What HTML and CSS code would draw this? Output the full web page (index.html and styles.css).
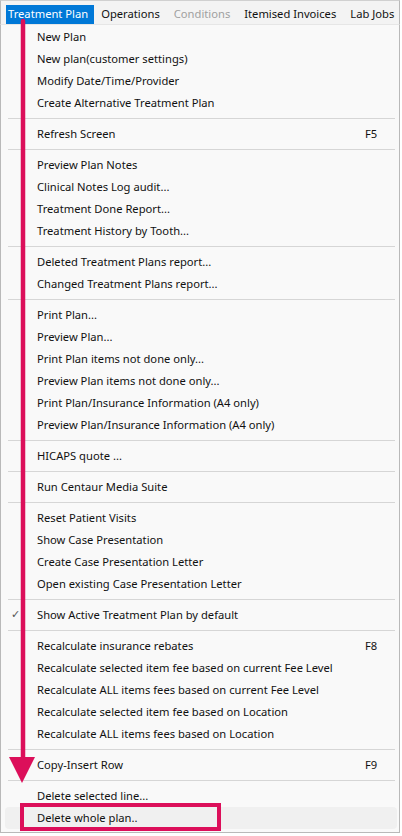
FILE: index.html
```html
<!DOCTYPE html>
<html>
<head>
<meta charset="utf-8">
<link rel="stylesheet" href="styles.css">
</head>
<body>
<div class="frame">
  <div class="menubar">
    <span class="top-item active">Treatment Plan</span>
    <span class="top-item">Operations</span>
    <span class="top-item disabled">Conditions</span>
    <span class="top-item">Itemised Invoices</span>
    <span class="top-item">Lab Jobs</span>
  </div>
  <div class="dropdown">
    <div class="item">New Plan</div>
    <div class="item">New plan(customer settings)</div>
    <div class="item">Modify Date/Time/Provider</div>
    <div class="item">Create Alternative Treatment Plan</div>
    <div class="sep"></div>
    <div class="item">Refresh Screen<span class="key">F5</span></div>
    <div class="sep"></div>
    <div class="item">Preview Plan Notes</div>
    <div class="item">Clinical Notes Log audit...</div>
    <div class="item">Treatment Done Report...</div>
    <div class="item">Treatment History by Tooth...</div>
    <div class="sep"></div>
    <div class="item">Deleted Treatment Plans report...</div>
    <div class="item">Changed Treatment Plans report...</div>
    <div class="sep"></div>
    <div class="item">Print Plan...</div>
    <div class="item">Preview Plan...</div>
    <div class="item">Print Plan items not done only...</div>
    <div class="item">Preview Plan items not done only...</div>
    <div class="item">Print Plan/Insurance Information (A4 only)</div>
    <div class="item">Preview Plan/Insurance Information (A4 only)</div>
    <div class="sep"></div>
    <div class="item">HICAPS quote ...</div>
    <div class="sep"></div>
    <div class="item">Run Centaur Media Suite</div>
    <div class="sep"></div>
    <div class="item">Reset Patient Visits</div>
    <div class="item">Show Case Presentation</div>
    <div class="item">Create Case Presentation Letter</div>
    <div class="item">Open existing Case Presentation Letter</div>
    <div class="sep"></div>
    <div class="item checked"><span class="check">✓</span>Show Active Treatment Plan by default</div>
    <div class="sep"></div>
    <div class="item">Recalculate insurance rebates<span class="key">F8</span></div>
    <div class="item">Recalculate selected item fee based on current Fee Level</div>
    <div class="item">Recalculate ALL items fees based on current Fee Level</div>
    <div class="item">Recalculate selected item fee based on Location</div>
    <div class="item">Recalculate ALL items fees based on Location</div>
    <div class="sep"></div>
    <div class="item">Copy-Insert Row<span class="key">F9</span></div>
    <div class="sep"></div>
    <div class="item">Delete selected line...</div>
    <div class="item hover">Delete whole plan..</div>
  </div>
  <svg class="annot" width="402" height="836" viewBox="0 0 402 836">
    <line x1="23" y1="21" x2="23" y2="760" stroke="#dc0f5a" stroke-width="4.5" stroke-linecap="round"/>
    <polygon points="9,757 35,757 22,783" fill="#dc0f5a"/>
    <rect x="22" y="805" width="197" height="24" fill="none" stroke="#dc0f5a" stroke-width="4"/>
  </svg>
</div>
</body>
</html>
```
FILE: styles.css
```css
html, body {
  margin: 0;
  padding: 0;
  background: #ffffff;
}
.frame {
  position: relative;
  width: 402px;
  height: 836px;
  overflow: hidden;
  font-family: "Noto Sans", "Open Sans", sans-serif;
  font-size: 11.2px;
  color: #111111;
}
.menubar {
  height: 24px;
  box-sizing: border-box;
  width: 400px;
  background: #f3f3f3;
  border-left: 1px solid #b9b9b9;
  border-right: 1px solid #b9b9b9;
  border-top: 1px solid #d0d0d0;
  padding: 4px 0 0 5px;
  display: flex;
  align-items: stretch;
}
.top-item {
  display: flex;
  align-items: center;
  padding: 0 7px 1px 7px;
  line-height: 18px;
  white-space: nowrap;
}
.top-item.active {
  background: #0078d7;
  color: #ffffff;
  padding: 0 6px 1px 2px;
}
.top-item.disabled {
  color: #a0a0a0;
}
.dropdown {
  width: 400px;
  box-sizing: border-box;
  background: #f9f9f9;
  border-left: 1px solid #b9b9b9;
  border-right: 1px solid #b9b9b9;
  border-bottom: 1px solid #b9b9b9;
  border-top: 1px solid #e6e6e6;
  padding: 1px 0 3px 0;
}
.item {
  height: 22px;
  box-sizing: border-box;
  display: flex;
  align-items: center;
  padding: 0 22px 1px 36px;
  white-space: nowrap;
  position: relative;
}
.key {
  margin-left: auto;
  width: 12px;
}
.check {
  position: absolute;
  left: 10px;
  top: 2px;
  font-size: 11px;
  color: #555555;
}
.sep {
  height: 9px;
  display: flex;
  align-items: center;
  margin: 0 4px 0 7px;
}
.sep::before {
  content: "";
  display: block;
  width: 100%;
  height: 1px;
  background: #d6d6d6;
}
.item.hover {
  background: #f0f0f0;
  border-radius: 4px;
  margin: 0 2px 0 4px;
  padding-left: 32px;
}
.annot {
  position: absolute;
  left: 0;
  top: 0;
  pointer-events: none;
}
```
